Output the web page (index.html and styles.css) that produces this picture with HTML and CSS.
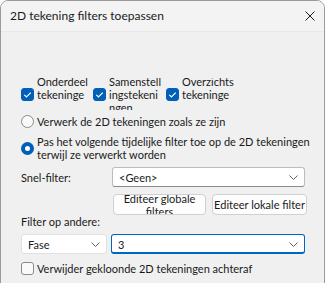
FILE: index.html
```html
<!DOCTYPE html>
<html lang="nl">
<head>
    <meta charset="UTF-8">
    <title>2D tekening filters toepassen</title>
    <link rel="stylesheet" href="styles.css">
</head>
<body>
    <div class="window">
        <div class="titlebar">
            <div class="title">2D tekening filters toepassen</div>
            <svg class="close" width="10" height="10" viewBox="0 0 10 10">
                <path d="M0.5 0.5 L9.5 9.5 M9.5 0.5 L0.5 9.5" stroke="#1a1a1a" stroke-width="1"/>
            </svg>
        </div>
        <div class="content">
            <div class="types">
                <div class="check-item">
                    <span class="box checked">
                        <svg width="13" height="13" viewBox="0 0 13 13"><path d="M3.3 6.8 L5.5 9 L9.7 4.6" fill="none" stroke="#fff" stroke-width="1.2"/></svg>
                    </span>
                    <span class="wrap-label"><span>Onderdeel tekeninge</span></span>
                </div>
                <div class="check-item">
                    <span class="box checked">
                        <svg width="13" height="13" viewBox="0 0 13 13"><path d="M3.3 6.8 L5.5 9 L9.7 4.6" fill="none" stroke="#fff" stroke-width="1.2"/></svg>
                    </span>
                    <span class="wrap-label"><span>Samenstell<wbr>ingstekeni<wbr>ngen</span></span>
                </div>
                <div class="check-item">
                    <span class="box checked">
                        <svg width="13" height="13" viewBox="0 0 13 13"><path d="M3.3 6.8 L5.5 9 L9.7 4.6" fill="none" stroke="#fff" stroke-width="1.2"/></svg>
                    </span>
                    <span class="wrap-label"><span>Overzichts tekeninge</span></span>
                </div>
            </div>

            <div class="option first-radio">
                <span class="radio"></span>
                <span>Verwerk de 2D tekeningen zoals ze zijn</span>
            </div>
            <div class="option second-radio">
                <span class="radio selected"></span>
                <span>Pas het volgende tijdelijke filter toe op de 2D tekeningen terwijl ze verwerkt worden</span>
            </div>

            <div class="field-row snel">
                <span class="field-label">Snel-filter:</span>
                <div class="combo wide">
                    <span>&lt;Geen&gt;</span>
                    <svg width="9" height="5" viewBox="0 0 9 5"><path d="M0.5 0.5 L4.5 4.5 L8.5 0.5" fill="none" stroke="#606060" stroke-width="1"/></svg>
                </div>
            </div>

            <div class="buttons">
                <div class="btn global"><span>Editeer globale filters</span></div>
                <div class="btn local"><span>Editeer lokale filter</span></div>
            </div>

            <div class="other-label">Filter op andere:</div>
            <div class="field-row others">
                <div class="combo small">
                    <span>Fase</span>
                    <svg width="9" height="5" viewBox="0 0 9 5"><path d="M0.5 0.5 L4.5 4.5 L8.5 0.5" fill="none" stroke="#606060" stroke-width="1"/></svg>
                </div>
                <div class="combo value focused">
                    <span>3</span>
                    <svg width="9" height="5" viewBox="0 0 9 5"><path d="M0.5 0.5 L4.5 4.5 L8.5 0.5" fill="none" stroke="#606060" stroke-width="1"/></svg>
                </div>
            </div>

            <div class="option last-check">
                <span class="box"></span>
                <span>Verwijder gekloonde 2D tekeningen achteraf</span>
            </div>
        </div>
    </div>
</body>
</html>
```

FILE: styles.css
```css
html, body {
    margin: 0;
    padding: 0;
    background: #ffffff;
}

body {
    font-family: Lato, "Liberation Sans", sans-serif;
    font-size: 11px;
    color: #1a1a1a;
}

.window {
    width: 323px;
    height: 290px;
    border: 1px solid #9a9a9a;
    border-radius: 8px 8px 0 0;
    background: #f0f0f0;
    overflow: hidden;
}

.titlebar {
    height: 30px;
    background: #f3f3f3;
    display: flex;
    align-items: center;
    justify-content: space-between;
    padding: 0 9px 0 9px;
    border-bottom: 1px solid #e8e8e8;
}

.title {
    font-size: 12px;
    margin-top: -1px;
}

.close {
    margin-top: -1px;
}

.content {
    padding: 46px 0 0 20px;
}

/* drawing type checkboxes */
.types {
    display: flex;
    height: 32px;
}

.check-item {
    width: 72px;
    display: flex;
    align-items: center;
}

.check-item:nth-child(2) {
    width: 73px;
}

.box {
    width: 13px;
    height: 13px;
    box-sizing: border-box;
    border: 1px solid #8a8a8a;
    border-radius: 3px;
    background: #fafafa;
    flex: none;
    display: flex;
}

.box.checked {
    background: #005fb8;
    border-color: #005fb8;
}

.box.checked svg {
    margin: -1px;
}

.wrap-label {
    height: 32px;
    width: 55px;
    margin-left: 3px;
    overflow: hidden;
    line-height: 13px;
}

.wrap-label span {
    display: block;
    margin-top: -3px;
}

/* radios and plain options */
.option {
    display: flex;
    align-items: center;
    line-height: 13px;
}

.option > span:last-child {
    margin-left: 3px;
    width: 275px;
}

.radio {
    width: 13px;
    height: 13px;
    box-sizing: border-box;
    border: 1px solid #8a8a8a;
    border-radius: 50%;
    background: #fafafa;
    flex: none;
}

.radio.selected {
    background: #ffffff;
    border: 4px solid #005fb8;
}

.first-radio {
    margin-top: 4px;
    height: 14px;
}

.second-radio {
    margin-top: 7px;
    height: 26px;
}

.field-row {
    display: flex;
    align-items: center;
}

.snel {
    margin-top: 6px;
}

.field-label {
    width: 91px;
}

.combo {
    height: 20px;
    box-sizing: border-box;
    border: 1px solid #bcbcbc;
    border-bottom-color: #8a8a8a;
    border-radius: 3px;
    background: #ffffff;
    display: flex;
    align-items: center;
    justify-content: space-between;
    padding: 0 6px 0 6px;
}

.combo.wide {
    width: 193px;
}

.combo.small {
    width: 86px;
    border-color: #e0e0e0;
    border-bottom-color: #e0e0e0;
}

.combo.value {
    width: 194px;
    margin-left: 4px;
}

.combo.focused {
    border-color: #0067c0;
    border-bottom-width: 2px;
    padding-top: 1px;
}

.buttons {
    display: flex;
    margin-top: 7px;
    margin-left: 92px;
    gap: 6px;
}

.btn {
    height: 21px;
    box-sizing: border-box;
    border: 1px solid #d0d0d0;
    border-radius: 4px;
    background: #fdfdfd;
    overflow: hidden;
    display: flex;
    align-items: center;
    justify-content: center;
    text-align: center;
    line-height: 13px;
}

.btn.global {
    width: 93px;
}

.btn.global span {
    width: 84px;
}

.btn.local {
    width: 95px;
    white-space: nowrap;
}

.other-label {
    height: 14px;
    line-height: 14px;
    margin-top: 0;
}

.others {
    margin-top: 5px;
}

.last-check {
    margin-top: 7px;
    height: 14px;
}
```
